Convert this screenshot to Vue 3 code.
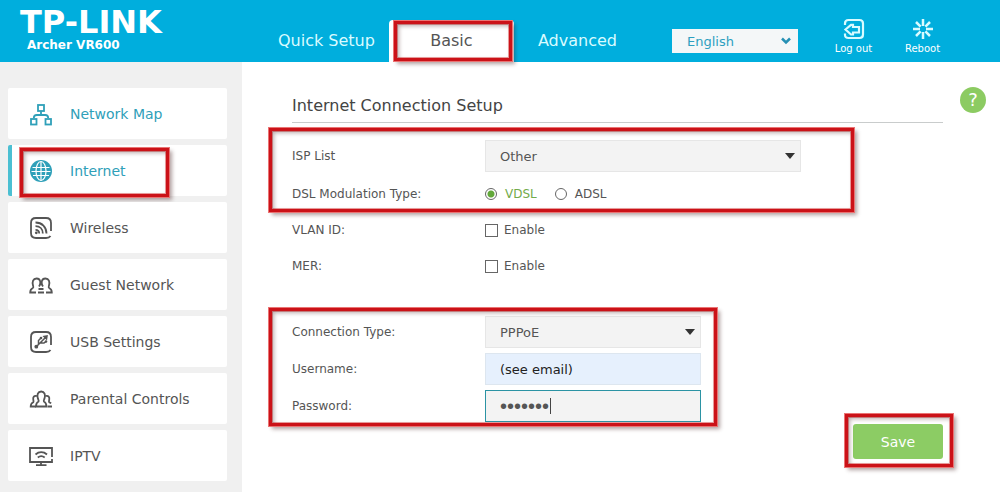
<script setup>
import { ref } from 'vue'

const menu = [
  { id: 'map', label: 'Network Map' },
  { id: 'internet', label: 'Internet' },
  { id: 'wireless', label: 'Wireless' },
  { id: 'guest', label: 'Guest Network' },
  { id: 'usb', label: 'USB Settings' },
  { id: 'parental', label: 'Parental Controls' },
  { id: 'iptv', label: 'IPTV' }
]
const language = ref('English')
const isp = ref('Other')
const modulation = ref('VDSL')
const vlan = ref(false)
const mer = ref(false)
const connection = ref('PPPoE')
const username = ref('(see email)')
const password = ref('1234567')
</script>

<template>
  <div class="page">
    <header class="header">
      <div class="brand">
        <div class="logo">TP-LINK</div>
        <div class="model">Archer VR600</div>
      </div>
      <nav class="tabs">
        <a href="#quick" class="tab">Quick Setup</a>
        <a href="#basic" class="tab current">Basic<span class="mark mark-tab"></span></a>
        <a href="#advanced" class="tab">Advanced</a>
      </nav>
      <div class="tools">
        <div class="lang">
          <select v-model="language" aria-label="Language">
            <option>English</option>
          </select>
          <svg class="chevron" viewBox="0 0 10 8"><path d="M1 1.500 5 5.500 9 1.500" /></svg>
        </div>
        <button type="button" class="tool">
          <svg viewBox="0 0 22 22">
            <path d="M2 7V5.500C2 3 3.200 2 5.500 2h11C18.800 2 20 3.200 20 5.500v11c0 2.300-1.200 3.500-3.500 3.500h-11C3.200 20 2 19 2 17v-1.500" />
            <path d="M2.500 11.500 8 6.800h2V9h6v5.500h-6V16.500H8z" />
          </svg>
          <span>Log out</span>
        </button>
        <button type="button" class="tool">
          <svg viewBox="0 0 22 22" class="burst">
            <path d="M11 1v7M11 14v7M1 11h7M14 11h7M4 4l4.600 4.600M13.400 13.400 18 18M18 4l-4.600 4.600M8.600 13.400 4 18" />
          </svg>
          <span>Reboot</span>
        </button>
      </div>
    </header>

    <div class="body">
      <nav class="side">
        <a
          v-for="item in menu"
          :key="item.id"
          :href="'#' + item.id"
          class="item"
          :class="{ accent: item.id === 'map' || item.id === 'internet', active: item.id === 'internet' }"
        >
          <svg class="icon" viewBox="0 0 24 24">
            <g v-if="item.id === 'map'" class="thick">
              <rect x="9" y="3" width="6" height="6" />
              <rect x="2" y="17" width="5.500" height="5.500" />
              <rect x="16.500" y="17" width="5.500" height="5.500" />
              <path d="M12 9v4M4.800 16c0-2 1-3 3-3h8.400c2 0 3 1 3 3" />
            </g>
            <g v-else-if="item.id === 'internet'">
              <circle cx="12" cy="12" r="11" fill="currentColor" stroke="none" />
              <path class="white" d="M3.500 8.500h17M2.500 12.500h19M4 16.500h16M12 2.500v19" />
              <ellipse class="white" cx="12" cy="12" rx="5" ry="9.500" />
            </g>
            <g v-else-if="item.id === 'wireless'">
              <path class="thick" d="M22 15V7c0-3.600-1.400-5-5-5H7C3.400 2 2 3.400 2 7v10c0 3.600 1.400 5 5 5h10c2 0 3.500-.5 4.500-2" />
              <path class="thick" d="M6.500 6.500C13 6.500 17.500 11 17.500 17.500M6.500 10.200c4.300 0 7.300 3 7.300 7.300M6.500 13.800c2.300 0 3.700 1.400 3.700 3.700" />
              <circle cx="7.300" cy="16.800" r="1.400" fill="currentColor" stroke="none" />
            </g>
            <g v-else-if="item.id === 'guest'" class="thick">
              <path d="M7 19.500H1.200c0-2.500.5-3.500 2.600-4.500 1-.7.500-1.600.2-2.600C3 9 4 5.500 7.500 5.500c2 0 3.500 1 3.800 3.500.2 2-.3 3.200-1.300 4.500" />
              <path d="M17 19.500h5.800c0-2.500-.5-3.500-2.600-4.500-1-.7-.5-1.600-.2-2.600C21 9 20 5.500 16.500 5.500c-2 0-3.500 1-3.800 3.500-.2 2 .3 3.200 1.300 4.500" />
              <path d="M9.500 16h5M9 19.500h6" />
            </g>
            <g v-else-if="item.id === 'usb'">
              <path class="thick" d="M22 15V7c0-3.600-1.400-5-5-5H7C3.400 2 2 3.400 2 7v10c0 3.600 1.400 5 5 5h10c2 0 3.500-.5 4.500-2" />
              <path d="M7 17 17 7M9.500 14.500v-4L11.500 8.500M11 13h4l2-1.500" />
              <circle cx="7.300" cy="16.700" r="1.900" fill="currentColor" stroke="none" />
              <path d="m15 6.500 3-.5-.5 3z" fill="currentColor" />
              <circle cx="12" cy="8" r="1.300" fill="currentColor" stroke="none" />
              <circle cx="17" cy="11.500" r="1.300" fill="currentColor" stroke="none" />
            </g>
            <g v-else-if="item.id === 'parental'" class="thick">
              <path d="M7 19.500c0-3 .5-4 2.500-5 .5-1 0-1.700-.6-3C7.700 8 8.800 4.500 12.200 4.500S16.700 8 15.500 11.500c-.6 1.300-1.100 2-.6 3 2 1 2.500 2 2.500 5z" />
              <path d="M8 9c-3-.8-4.300 1-3.700 3.800.2 1.300.5 1.700 0 2.400-1.800.8-2.600 1.800-2.600 4.300H7M16.500 9c3-.8 4.300 1 3.700 3.800-.2 1.300-.5 1.700 0 2.400l2 1M18.500 19.500H23" />
            </g>
            <g v-else class="thick">
              <path d="M23 13V4H1v14h22v-3M12 18v3M7 21.200h10.500" />
              <path d="M6.500 10.500c3.400-3 8.100-3 11.500 0M8.800 13.500c2-1.600 4.900-1.600 6.900 0" />
            </g>
          </svg>
          <span>{{ item.label }}</span>
          <span v-if="item.id === 'internet'" class="mark mark-item"></span>
        </a>
      </nav>

      <main class="main">
        <form class="content" @submit.prevent>
          <h1>Internet Connection Setup</h1>

          <div class="group">
            <div class="row">
              <label class="name" for="isp">ISP List</label>
              <div class="pick wide">
                <select id="isp" v-model="isp"><option>Other</option></select>
                <svg class="arrow" viewBox="0 0 10 6"><path d="M0 0h10L5 6z" /></svg>
              </div>
            </div>
            <div class="row line after-select" role="radiogroup" aria-labelledby="dsl">
              <span id="dsl" class="name">DSL Modulation Type:</span>
              <label class="choice" :class="{ chosen: modulation === 'VDSL' }"><input v-model="modulation" type="radio" name="dsl" value="VDSL" />VDSL</label>
              <label class="choice" :class="{ chosen: modulation === 'ADSL' }"><input v-model="modulation" type="radio" name="dsl" value="ADSL" />ADSL</label>
            </div>
            <span class="mark mark-dsl"></span>
          </div>

          <div class="row line">
            <span class="name">VLAN ID:</span>
            <label class="check"><input v-model="vlan" type="checkbox" />Enable</label>
          </div>
          <div class="row line">
            <span class="name">MER:</span>
            <label class="check"><input v-model="mer" type="checkbox" />Enable</label>
          </div>

          <div class="group account">
            <div class="row">
              <label class="name" for="conn">Connection Type:</label>
              <div class="pick">
                <select id="conn" v-model="connection"><option>PPPoE</option></select>
                <svg class="arrow" viewBox="0 0 10 6"><path d="M0 0h10L5 6z" /></svg>
              </div>
            </div>
            <div class="row">
              <label class="name" for="user">Username:</label>
              <input id="user" v-model="username" class="text filled" type="text" />
            </div>
            <div class="row">
              <label class="name" for="pass">Password:</label>
              <div class="secret">
                <input id="pass" v-model="password" class="text focused" type="password" />
                <span class="caret"></span>
              </div>
            </div>
            <span class="mark mark-account"></span>
          </div>

          <div class="actions">
            <div class="save-wrap">
              <button type="submit" class="save">Save</button>
              <span class="mark mark-save"></span>
            </div>
          </div>
        </form>
        <button type="button" class="help" aria-label="Help">?</button>
      </main>
    </div>
  </div>
</template>

<style>
body {
  margin: 0;
  background: #fff;
}
</style>

<style scoped>
.page {
  display: flex;
  flex-direction: column;
  min-height: 100vh;
  font-family: "DejaVu Sans", Verdana, sans-serif;
  font-size: 12px;
  color: #555;
}
.page *,
.page {
  box-sizing: border-box;
}
select,
input,
button {
  font-family: inherit;
  margin: 0;
}
a {
  color: inherit;
  text-decoration: none;
}

/* Header */
.header {
  display: flex;
  height: 62px;
  background: #00aedd;
  color: #fff;
}
.brand {
  width: 264px;
  padding: 6px 0 0 20px;
  font-weight: bold;
}
.logo {
  font-size: 32px;
  line-height: 32px;
}
.model {
  padding-left: 7px;
  line-height: 15px;
}
.tabs {
  display: flex;
  align-items: flex-end;
}
.tab {
  position: relative;
  height: 42px;
  padding: 0 14px;
  font-size: 16px;
  line-height: 42px;
  color: #d9fbff;
}
.current {
  width: 125px;
  padding: 0;
  margin-right: 10px;
  border-radius: 4px 4px 0 0;
  background: #fff;
  color: #555;
  text-align: center;
}
.tools {
  display: flex;
  flex: 1;
  justify-content: flex-end;
  padding-right: 43px;
}
.lang {
  position: relative;
  width: 126px;
  height: 24px;
  margin: 29px 21px 0 0;
}
.lang select {
  width: 100%;
  height: 100%;
  padding: 0 15px;
  border: 0;
  border-radius: 0;
  appearance: none;
  background: #f4f7f8;
  color: #2c9fc0;
  font-size: 13px;
}
.chevron {
  position: absolute;
  right: 7px;
  top: 8px;
  width: 10px;
  height: 8px;
  fill: none;
  stroke: #2590b4;
  stroke-width: 2.500;
}
.tool {
  display: flex;
  flex-direction: column;
  align-items: center;
  gap: 3px;
  width: 69px;
  padding: 18px 0 0;
  border: 0;
  background: none;
  color: #fff;
  font-size: 10px;
  line-height: 12px;
}
.tool svg {
  width: 22px;
  height: 22px;
  fill: none;
  stroke: #d9fbff;
  stroke-width: 2.200;
}
.tool .burst {
  stroke-width: 2.500;
}

/* Sidebar */
.body {
  display: flex;
  flex: 1;
}
.side {
  display: flex;
  flex-direction: column;
  gap: 6px;
  width: 242px;
  padding: 26px 15px 10px 8px;
  background: #f0f0f0;
}
.item {
  position: relative;
  display: flex;
  align-items: center;
  gap: 17px;
  height: 51px;
  padding-left: 21px;
  border-radius: 2px;
  background: #fff;
  font-size: 14px;
}
.accent {
  color: #2fa0b9;
}
.active {
  padding-left: 17px;
  border-left: 4px solid #4bbfd2;
}
.icon {
  width: 24px;
  height: 24px;
  fill: none;
  stroke: currentColor;
  stroke-width: 1.500;
}
.thick {
  stroke-width: 1.800;
}
.white {
  stroke: #fff;
  stroke-width: 1.200;
}

/* Form */
.main {
  display: flex;
  flex: 1;
  align-items: flex-start;
  gap: 17px;
  padding: 25px 14px 34px 50px;
}
.content {
  flex: 1;
}
h1 {
  height: 36px;
  margin: 0 0 17px;
  border-bottom: 1px solid #c9cccc;
  font-size: 16px;
  font-weight: normal;
  line-height: 38px;
  color: #444;
}
.group {
  position: relative;
}
.row {
  display: flex;
  align-items: center;
}
.name {
  width: 193px;
}
.line {
  height: 36px;
}
.after-select {
  margin-top: 4px;
}
.account {
  display: flex;
  flex-direction: column;
  gap: 5px;
  margin-top: 32px;
}
.pick,
.text {
  position: relative;
  width: 216px;
  height: 32px;
}
.wide {
  width: 316px;
}
.pick select,
.text {
  padding: 0 14px;
  border: 1px solid #e6e6e6;
  border-radius: 0;
  background: #f3f3f3;
  color: #555;
  font-size: 13px;
}
.pick select {
  width: 100%;
  height: 100%;
  appearance: none;
}
.arrow {
  position: absolute;
  right: 6px;
  top: 13px;
  width: 10px;
  height: 6px;
  fill: #333;
}
.text.filled {
  border-color: #dde6ef;
  background: #e6f0fd;
  color: #222;
}
.text.focused {
  display: block;
  border-color: #2b93a4;
  font-family: "Liberation Sans", Arial, sans-serif;
  font-size: 20px;
}
.secret {
  position: relative;
}
.caret {
  position: absolute;
  left: 65px;
  top: 8px;
  width: 1px;
  height: 16px;
  background: #444;
}
.choice,
.check {
  display: flex;
  align-items: center;
}
.choice {
  gap: 8px;
  margin-right: 18px;
}
.chosen {
  color: #72ab4a;
}
.check {
  gap: 6px;
}
.choice input,
.check input {
  width: 12px;
  height: 12px;
  border: 1px solid #666;
  appearance: none;
  background: #fff;
}
.check input {
  width: 13px;
  height: 13px;
}
.choice input {
  border-radius: 50%;
}
.choice input:checked {
  background: radial-gradient(circle, #62a83a 0 3px, #fff 4px);
}
.check input:checked {
  background: #62a83a;
}
.actions {
  display: flex;
  justify-content: flex-end;
  padding-top: 2px;
}
.save-wrap {
  position: relative;
}
.save {
  width: 90px;
  height: 35px;
  border: 0;
  border-radius: 3px;
  background: #8ccc64;
  color: #fff;
  font-size: 14px;
}
.help {
  width: 26px;
  height: 26px;
  padding: 0;
  border: 0;
  border-radius: 50%;
  background: #8ccb62;
  color: #fff;
  font-size: 18px;
  line-height: 26px;
}

/* Red callout frames laid over the controls */
.mark {
  position: absolute;
  border: 3px solid #cb1218;
  outline: 1px solid #ea7474;
  outline-offset: 0;
  box-shadow: 3px 3px 4px rgba(60, 20, 20, 0.4), inset 2px 2px 4px rgba(60, 20, 20, 0.35), inset 0 0 0 1px #f0a0a0;
  pointer-events: none;
}
.mark-tab {
  inset: 1px 2px 1px 5px;
}
.mark-item {
  inset: 3px 58px -1px 8px;
}
.mark-dsl {
  inset: -12px 89px 0 -23px;
}
.mark-account {
  right: auto;
  left: -23px;
  top: -8px;
  bottom: -4px;
  width: 448px;
}
.mark-save {
  inset: -10px -10px -8px -8px;
}
</style>
